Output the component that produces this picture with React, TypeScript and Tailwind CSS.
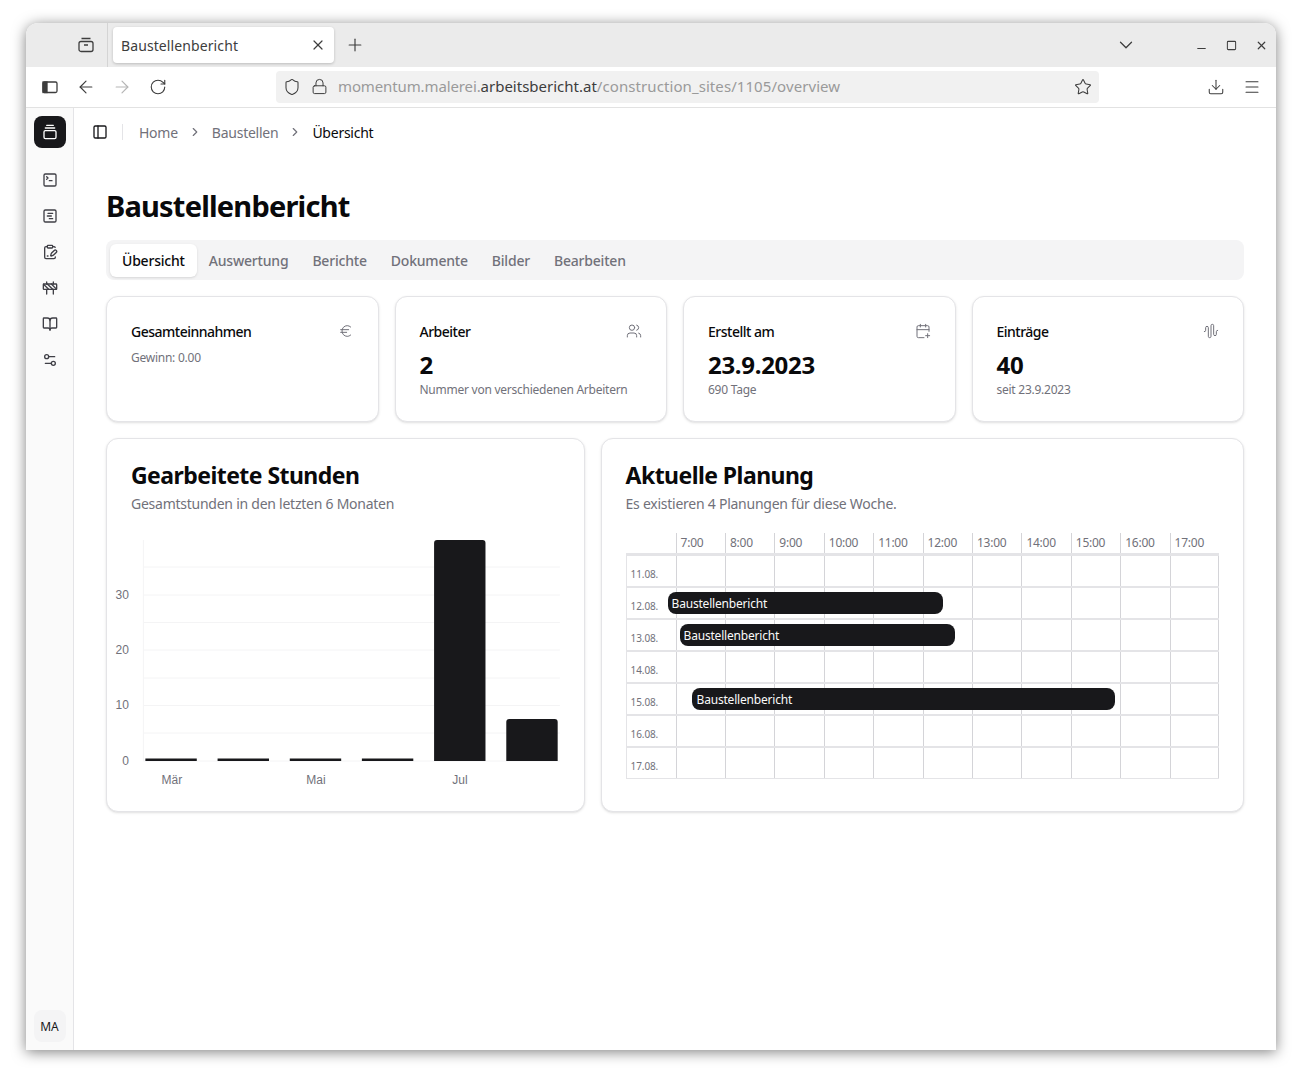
import {
  ArrowLeft,
  ArrowRight,
  AudioWaveform,
  BookOpen,
  CalendarPlus,
  ChevronDown,
  ChevronRight,
  ClipboardPenLine,
  Construction,
  Download,
  Euro,
  GalleryVerticalEnd,
  Lock,
  Menu,
  Minus,
  PanelLeft,
  Plus,
  RotateCw,
  Settings2,
  Shield,
  Square,
  SquareChartGantt,
  SquareTerminal,
  Star,
  Users,
  X,
} from "lucide-react";

const stunden = ["7:00", "8:00", "9:00", "10:00", "11:00", "12:00", "13:00", "14:00", "15:00", "16:00", "17:00"];
const tage = ["11.08.", "12.08.", "13.08.", "14.08.", "15.08.", "16.08.", "17.08."];
const tabs = ["Auswertung", "Berichte", "Dokumente", "Bilder", "Bearbeiten"];

const balken = [
  { x: 145.5, y: 758.5, h: 2.5 },
  { x: 217.7, y: 758.5, h: 2.5 },
  { x: 289.9, y: 758.5, h: 2.5 },
  { x: 362, y: 758.5, h: 2.5 },
  { x: 434.2, y: 540, h: 221 },
  { x: 506.4, y: 719, h: 42 },
];

function BrowserChrome() {
  return (
    <>
      <div className="flex h-[44px] items-stretch bg-[#ebebeb] text-[#3d3d3d]">
        <div className="flex w-[82px] items-center justify-end border-r border-[#d4d4d4] pr-[13px]">
          <svg width="16" height="16" viewBox="0 0 16 16" fill="none" stroke="currentColor" strokeWidth="1.3">
            <path d="M3.5 1.5h9" />
            <rect x="1" y="4.5" width="14" height="10" rx="2" />
            <path d="M6 8h4" />
          </svg>
        </div>
        <div className="ml-[5px] mt-[4px] flex h-[36px] w-[221px] items-center justify-between rounded bg-white pl-[8px] pr-[8px] shadow-[0_1px_3px_rgba(0,0,0,0.2)]">
          <span className="text-[14px] tracking-[0.1px]">Baustellenbericht</span>
          <X size={16} strokeWidth={1.8} />
        </div>
        <div className="ml-[11px] flex items-center">
          <Plus size={20} strokeWidth={1.4} />
        </div>
        <div className="ml-auto mr-[8px] flex items-center gap-[58px]">
          <ChevronDown size={22} strokeWidth={1.4} />
          <div className="flex items-center gap-[18px]">
            <Minus size={13} strokeWidth={2} className="mt-[7px]" />
            <Square size={11} strokeWidth={2.2} />
            <X size={13} strokeWidth={2.2} />
          </div>
        </div>
      </div>
      <div className="flex h-[41px] items-center border-b border-[#e2e2e2] bg-white pb-px text-[#3d3d3d]">
        <div className="ml-[16px] flex items-center gap-[18px]">
          <svg width="16" height="16" viewBox="0 0 16 16" fill="none" stroke="currentColor" strokeWidth="1.3">
            <rect x="1" y="3" width="14" height="10.5" rx="1.5" />
            <rect x="1" y="3" width="4" height="10.5" fill="currentColor" />
          </svg>
          <ArrowLeft size={20} strokeWidth={1.4} />
          <ArrowRight size={20} strokeWidth={1.4} className="ml-[-2px] text-[#b5b5b5]" />
          <RotateCw size={18} strokeWidth={1.5} className="ml-[-1px]" />
        </div>
        <div className="ml-[109px] flex h-[32px] w-[823px] items-center rounded bg-[#f1f1f1] pl-[7px] pr-[7px]">
          <Shield size={18} strokeWidth={1.4} />
          <Lock size={17} strokeWidth={1.4} className="ml-[10px]" />
          <span className="ml-[10px] text-[15px] text-[#9a9a9a]">
            <span className="tracking-[-0.12px]">momentum.malerei.</span>
            <span className="text-[#3d3d3d]">arbeitsbericht.at</span>
            <span className="tracking-[0.08px]">/construction_sites/1105/overview</span>
          </span>
          <Star size={18} strokeWidth={1.4} className="ml-auto" />
        </div>
        <div className="ml-[108px] flex items-center gap-[18px]">
          <Download size={18} strokeWidth={1.4} />
          <Menu size={18} strokeWidth={1.4} />
        </div>
      </div>
    </>
  );
}

function Sidebar() {
  const icons = [SquareTerminal, SquareChartGantt, ClipboardPenLine, Construction, BookOpen, Settings2];
  return (
    <aside className="flex w-[48px] shrink-0 flex-col items-center border-r border-[#e4e4e7] bg-[#fafafa] pb-[8px] pt-[8px]">
      <div className="flex h-[32px] w-[32px] items-center justify-center rounded-lg bg-[#18181b] text-white">
        <GalleryVerticalEnd size={16} />
      </div>
      <div className="mt-[24px] flex flex-col gap-[20px] text-[#3f3f46]">
        {icons.map((Icon, i) => (
          <Icon key={i} size={16} />
        ))}
      </div>
      <div className="mt-auto flex h-[32px] w-[32px] items-center justify-center rounded-lg bg-[#f4f4f5] pt-[1px] text-[12px] text-[#18181b]">
        MA
      </div>
    </aside>
  );
}

function Tarjeta({
  titulo,
  valor,
  detalle,
  icon,
}: {
  titulo: string;
  valor?: string;
  detalle: string;
  icon: React.ReactNode;
}) {
  return (
    <div className="h-[126px] rounded-xl border border-[#e4e4e7] bg-white p-6 shadow-sm">
      <div className="flex h-[20px] items-center justify-between">
        <h3 className="text-[14px] font-medium tracking-[-0.5px] text-[#09090b]">{titulo}</h3>
        <span className="text-[#71717a]">{icon}</span>
      </div>
      {valor && (
        <div className="mt-[8px] text-[24px] font-bold leading-[32px] tracking-[-0.3px] text-[#09090b]">{valor}</div>
      )}
      <p className={`text-[12px] leading-[16px] tracking-[-0.25px] text-[#71717a] ${valor ? "mt-[1px]" : "mt-[9px]"}`}>
        {detalle}
      </p>
    </div>
  );
}

function StundenChart() {
  return (
    <svg viewBox="107.4 530 476 262" className="mt-[16px] block w-full" style={{ height: 262 }}>
      {[567, 595, 622.5, 650, 678, 705.5, 733, 761].map((y) => (
        <line key={y} x1="143.5" x2="560" y1={y} y2={y} stroke="#f4f4f5" />
      ))}
      <line x1="143.5" x2="143.5" y1="540" y2="761" stroke="#f4f4f5" />
      {balken.map((b) => (
        <path
          key={b.x}
          fill="#18181b"
          d={
            b.h > 10
              ? `M${b.x} ${b.y + b.h}V${b.y + 3}q0-3 3-3h45.4q3 0 3 3V${b.y + b.h}z`
              : `M${b.x} ${b.y}h51.4v${b.h}h-51.4z`
          }
        />
      ))}
      <g fontFamily="'Liberation Sans', sans-serif" fontSize="12" fill="#71717a">
        <text x="129" y="599" textAnchor="end">30</text>
        <text x="129" y="654" textAnchor="end">20</text>
        <text x="129" y="709" textAnchor="end">10</text>
        <text x="129" y="765" textAnchor="end">0</text>
        <text x="172" y="784" textAnchor="middle">Mär</text>
        <text x="316" y="784" textAnchor="middle">Mai</text>
        <text x="460" y="784" textAnchor="middle">Jul</text>
      </g>
    </svg>
  );
}

function Planung() {
  return (
    <div className="relative mt-[19px] text-[#71717a]">
      <div className="grid h-[20px] grid-cols-[50px_repeat(11,1fr)] text-[12px] leading-[20px] tracking-[-0.25px]">
        <div />
        {stunden.map((s) => (
          <div key={s} className="border-l border-[#d4d4d8] pl-[4px]">
            {s}
          </div>
        ))}
      </div>
      <div className="border-y border-[#e4e4e7]">
        {tage.map((t) => (
          <div key={t} className="grid h-[32px] grid-cols-[50px_repeat(11,1fr)] border-t-2 border-[#e4e4e7]">
            <div className="border-l border-[#e4e4e7] pl-[4px] pt-[11px] text-[10px] leading-[14px] tracking-[-0.1px]">
              {t}
            </div>
            {stunden.map((s) => (
              <div key={s} className="border-l border-[#d4d4d8] last:border-r" />
            ))}
          </div>
        ))}
      </div>
      <Balken left={42} top={59} width={275} />
      <Balken left={54} top={91} width={275} />
      <Balken left={66} top={155} width={423} pad />
    </div>
  );
}

function Balken({ left, top, width, pad }: { left: number; top: number; width: number; pad?: boolean }) {
  return (
    <div
      className={`absolute flex h-[22px] items-center rounded-lg bg-[#18181b] pt-[1px] text-[12px] tracking-[-0.2px] text-[#fafafa] ${pad ? "pl-[5px]" : "pl-[4px]"}`}
      style={{ left, top, width }}
    >
      Baustellenbericht
    </div>
  );
}

export default function App() {
  return (
    <div className="min-h-[1079px] bg-white pl-[26px] pt-[23px] font-['Noto_Sans',sans-serif]">
      <div className="flex h-[1027px] w-[1250px] flex-col overflow-hidden rounded-t-xl bg-white shadow-[0_2px_14px_rgba(0,0,0,0.5)]">
        <BrowserChrome />
        <div className="flex min-h-0 flex-1">
          <Sidebar />
          <main className="flex-1 px-[32px]">
            <div className="flex h-[48px] items-center text-[14px] tracking-[-0.25px] text-[#71717a]">
              <PanelLeft size={16} className="ml-[-14px] text-[#18181b]" />
              <span className="ml-[14px] mr-[16px] h-[16px] w-px bg-[#e4e4e7]" />
              <span>Home</span>
              <ChevronRight size={14} className="mx-[10px]" />
              <span>Baustellen</span>
              <ChevronRight size={14} className="mx-[10px]" />
              <span className="text-[#09090b]">Übersicht</span>
            </div>
            <h1 className="mt-[32px] text-[29px] font-bold leading-[36px] tracking-[-0.8px] text-[#09090b]">
              Baustellenbericht
            </h1>
            <div className="mt-[16px] flex h-[40px] items-center rounded-lg bg-[#f4f4f5] px-[4px] text-[14px] font-medium tracking-[-0.2px] text-[#71717a]">
              <span className="rounded-md bg-white px-[12px] py-[6px] text-[#09090b] shadow-sm">Übersicht</span>
              {tabs.map((t) => (
                <span key={t} className="px-[12px]">
                  {t}
                </span>
              ))}
            </div>
            <div className="mt-[16px] grid grid-cols-4 gap-[16px]">
              <Tarjeta titulo="Gesamteinnahmen" detalle="Gewinn: 0.00" icon={<Euro size={16} strokeWidth={1.5} />} />
              <Tarjeta
                titulo="Arbeiter"
                valor="2"
                detalle="Nummer von verschiedenen Arbeitern"
                icon={<Users size={16} strokeWidth={1.5} />}
              />
              <Tarjeta
                titulo="Erstellt am"
                valor="23.9.2023"
                detalle="690 Tage"
                icon={<CalendarPlus size={16} strokeWidth={1.5} />}
              />
              <Tarjeta
                titulo="Einträge"
                valor="40"
                detalle="seit 23.9.2023"
                icon={<AudioWaveform size={16} strokeWidth={1.5} />}
              />
            </div>
            <div className="mt-[16px] grid grid-cols-7 gap-[16px]">
              <section className="col-span-3 h-[374px] rounded-xl border border-[#e4e4e7] bg-white shadow-sm">
                <div className="px-6 pt-6">
                  <h2 className="text-[23px] font-bold leading-[24px] tracking-[-0.55px] text-[#09090b]">Gearbeitete Stunden</h2>
                  <p className="mt-[7px] text-[14px] leading-[20px] tracking-[-0.25px] text-[#71717a]">
                    Gesamtstunden in den letzten 6 Monaten
                  </p>
                </div>
                <StundenChart />
              </section>
              <section className="col-span-4 h-[374px] rounded-xl border border-[#e4e4e7] bg-white p-6 shadow-sm">
                <h2 className="text-[23px] font-bold leading-[24px] tracking-[-0.55px] text-[#09090b]">Aktuelle Planung</h2>
                <p className="mt-[7px] text-[14px] leading-[20px] tracking-[-0.25px] text-[#71717a]">
                  Es existieren 4 Planungen für diese Woche.
                </p>
                <Planung />
              </section>
            </div>
          </main>
        </div>
      </div>
    </div>
  );
}
